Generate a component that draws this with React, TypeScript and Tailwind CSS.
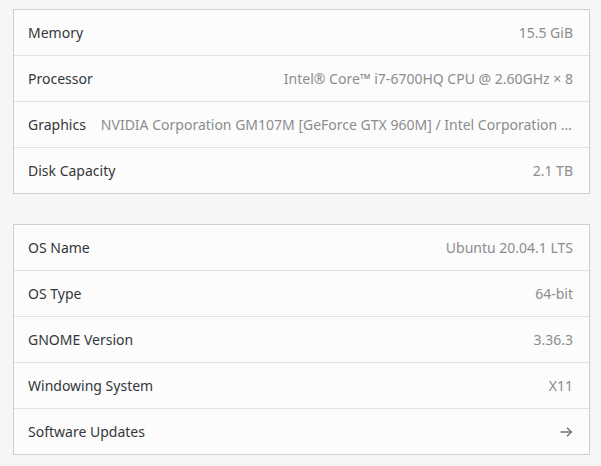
type Row = {
  label: string
  value?: string
  arrow?: boolean
}

const hardware: Row[] = [
  { label: 'Memory', value: '15.5 GiB' },
  { label: 'Processor', value: 'Intel® Core™ i7-6700HQ CPU @ 2.60GHz × 8' },
  {
    label: 'Graphics',
    value: 'NVIDIA Corporation GM107M [GeForce GTX 960M] / Intel Corporation HD Graphics 530 (SKL GT2)',
  },
  { label: 'Disk Capacity', value: '2.1 TB' },
]

const system: Row[] = [
  { label: 'OS Name', value: 'Ubuntu 20.04.1 LTS' },
  { label: 'OS Type', value: '64-bit' },
  { label: 'GNOME Version', value: '3.36.3' },
  { label: 'Windowing System', value: 'X11' },
  { label: 'Software Updates', arrow: true },
]

function NextArrow() {
  return (
    <svg width="13" height="10" viewBox="0 0 13 10" fill="none" stroke="#7b7d7e" strokeWidth="1.6">
      <path d="M0.5 5H11.5" />
      <path d="M7 0.8L11.3 5L7 9.2" strokeLinejoin="miter" />
    </svg>
  )
}

function InfoList({ rows }: { rows: Row[] }) {
  return (
    <div className="border border-[#cfcfcf] bg-[#fcfcfc]">
      {rows.map((row, idx) => (
        <div
          key={row.label}
          className={
            'box-content flex h-[45px] items-center gap-[15px] pl-[14px] pr-[16px] ' +
            (idx < rows.length - 1 ? 'border-b border-[#e2e2e2]' : '')
          }
        >
          <span className="shrink-0 text-[#34373a]">{row.label}</span>
          {row.value && (
            <span className="min-w-0 flex-1 truncate text-right text-[#8b8d8e]">{row.value}</span>
          )}
          {row.arrow && (
            <span className="ml-auto flex">
              <NextArrow />
            </span>
          )}
        </div>
      ))}
    </div>
  )
}

export default function App() {
  return (
    <div
      className="h-[466px] w-[601px] bg-[#f6f6f6] pl-[13px] pr-[11px] pt-[9px] text-[14px]"
      style={{ fontFamily: '"Noto Sans", "Open Sans", sans-serif' }}
    >
      <InfoList rows={hardware} />
      <div className="h-[30px]" />
      <InfoList rows={system} />
    </div>
  )
}
